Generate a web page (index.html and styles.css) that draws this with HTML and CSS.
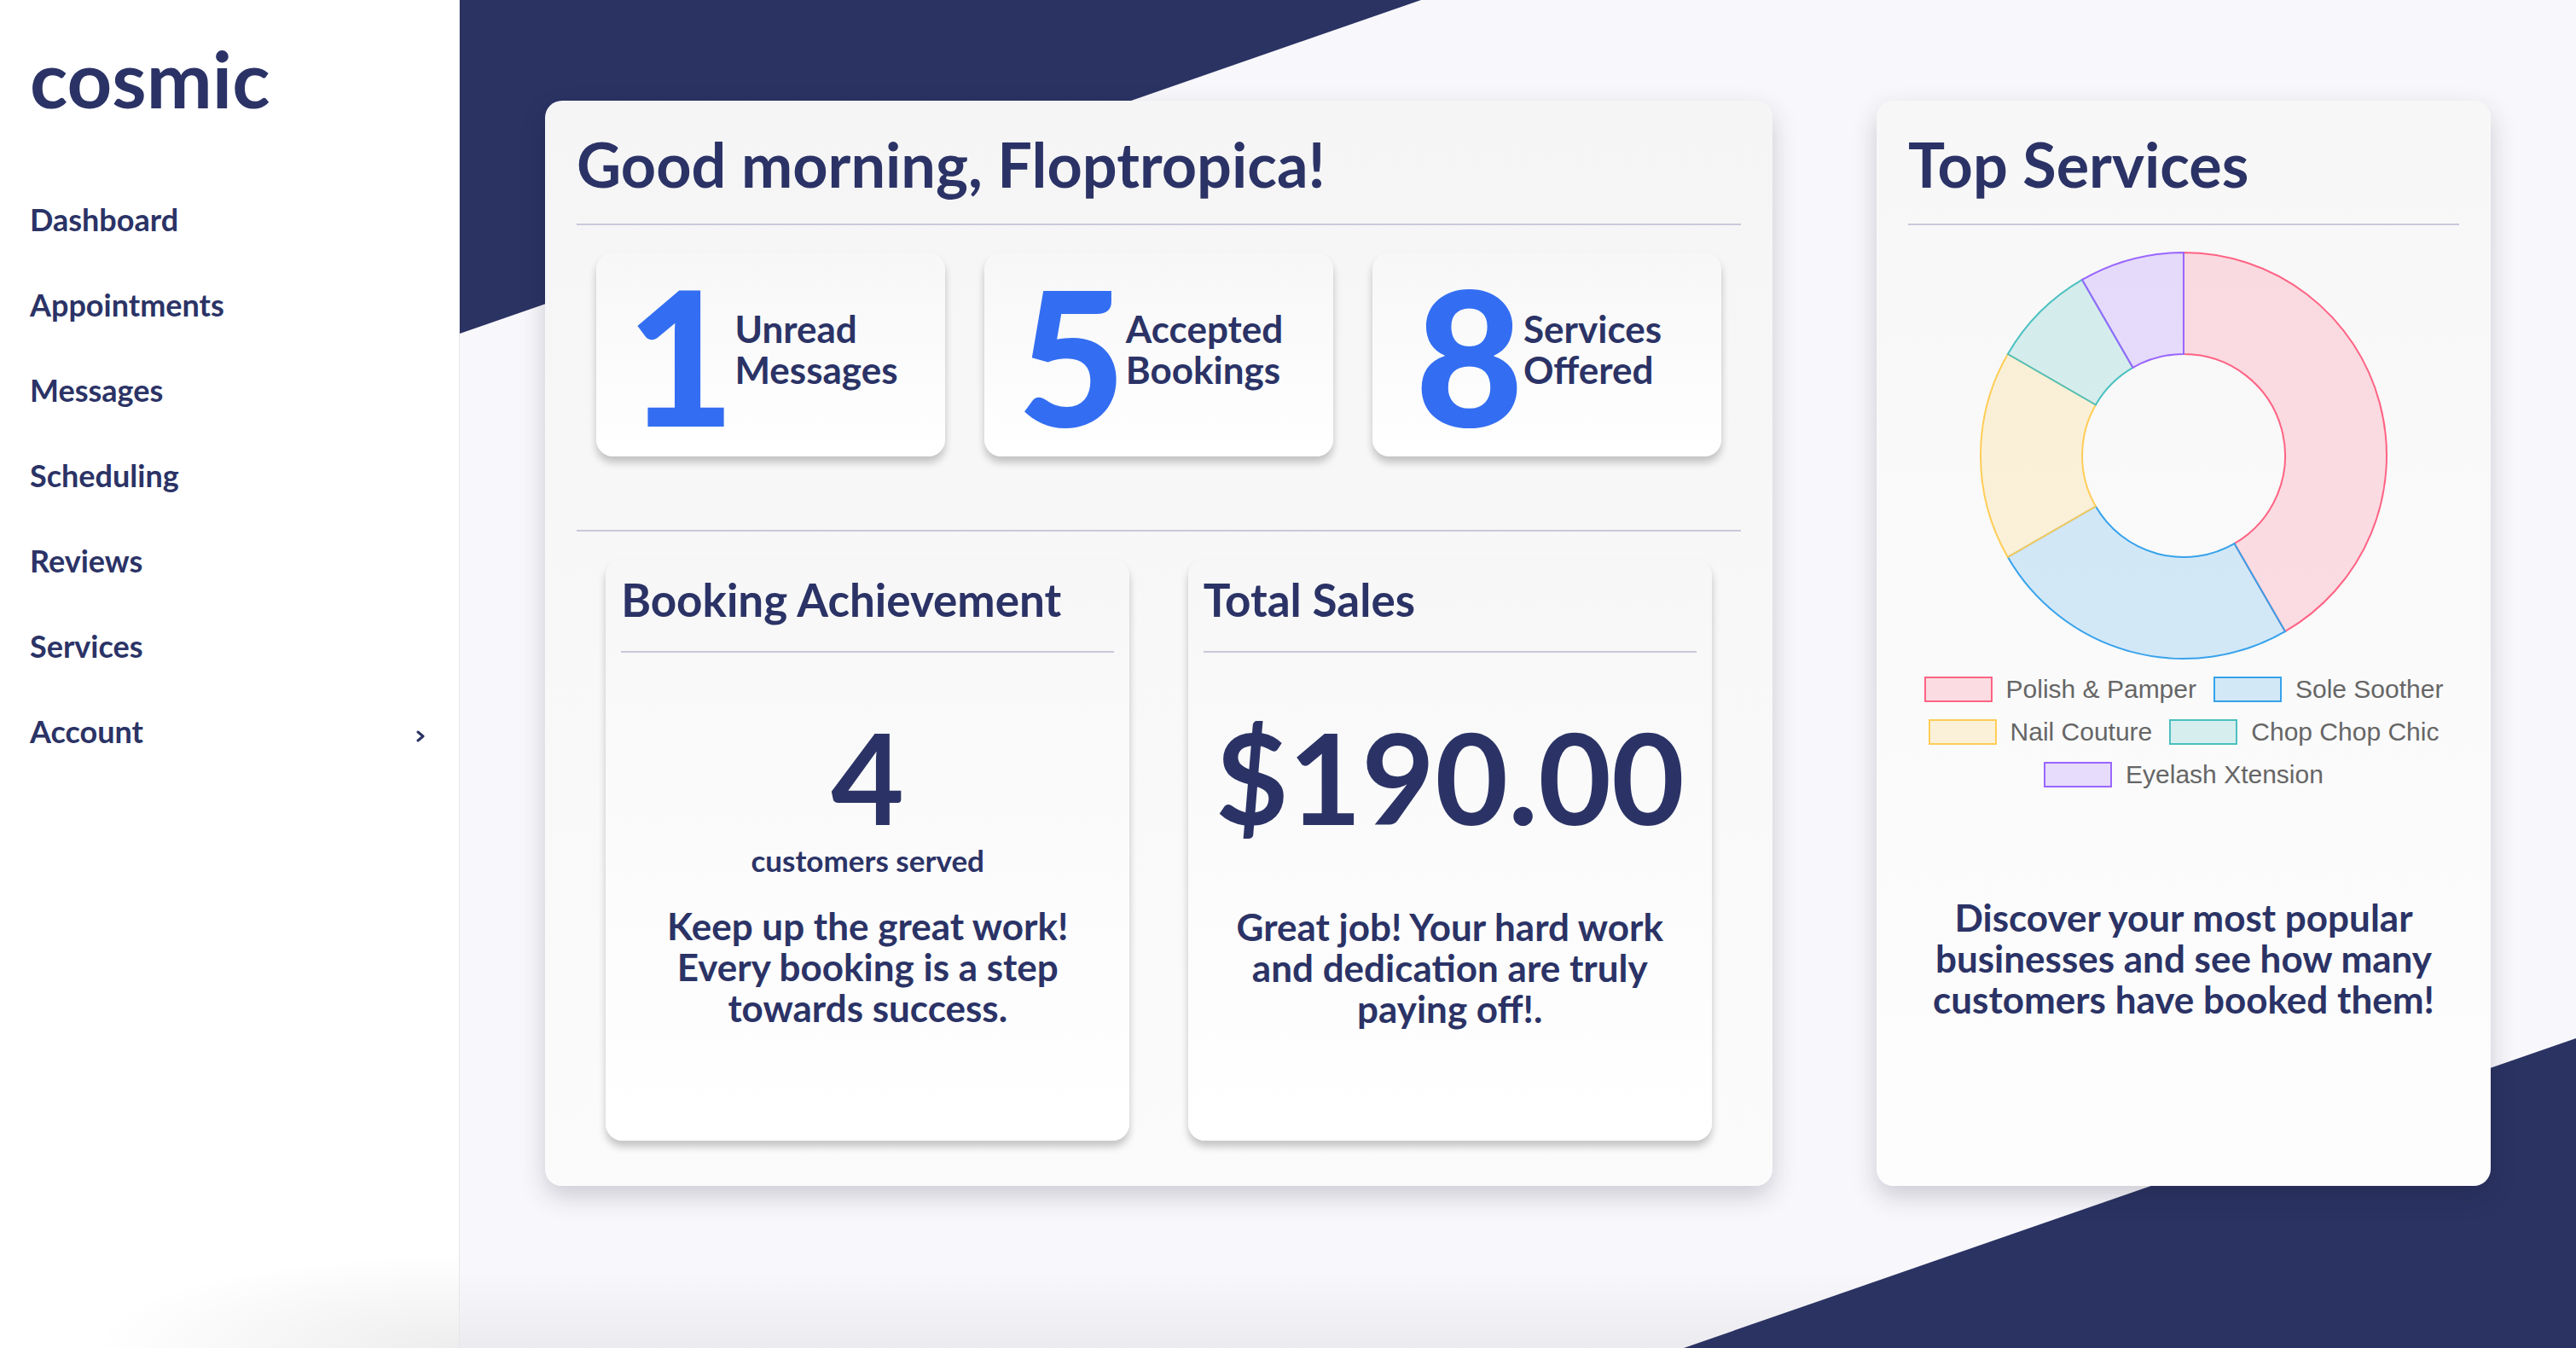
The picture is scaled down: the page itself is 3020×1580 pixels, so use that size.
FILE: index.html
```html
<!DOCTYPE html>
<html lang="en">
<head>
<meta charset="utf-8">
<title>cosmic – Dashboard</title>
<link rel="stylesheet" href="styles.css">
</head>
<body>
<div class="app">
  <aside class="sidebar">
    <div class="logo">cosmic</div>
    <nav class="nav">
      <a class="nav-item" href="#">Dashboard</a>
      <a class="nav-item" href="#">Appointments</a>
      <a class="nav-item" href="#">Messages</a>
      <a class="nav-item" href="#">Scheduling</a>
      <a class="nav-item" href="#">Reviews</a>
      <a class="nav-item" href="#">Services</a>
      <a class="nav-item" href="#"><span>Account</span>
        <svg class="chev" width="10" height="14" viewBox="0 0 10 14"><polyline points="2,2 8,7 2,12" fill="none" stroke="#2b3363" stroke-width="3" stroke-linecap="round" stroke-linejoin="round"/></svg>
      </a>
    </nav>
  </aside>

  <main class="main">
    <svg class="bg-shapes" viewBox="0 0 2481 1580" preserveAspectRatio="none">
      <polygon points="0,0 1127,0 0,391" fill="#2b3363"/>
      <polygon points="1435,1580 2481,1217 2481,1580" fill="#2b3363"/>
    </svg>

    <section class="card card-main">
      <h1 class="card-title">Good morning, Floptropica!</h1>
      <div class="divider"></div>
      <div class="stats">
        <div class="stat"><span class="stat-num">1</span><span class="stat-label">Unread<br>Messages</span></div>
        <div class="stat"><span class="stat-num">5</span><span class="stat-label">Accepted<br>Bookings</span></div>
        <div class="stat"><span class="stat-num">8</span><span class="stat-label">Services<br>Offered</span></div>
      </div>
      <div class="divider divider-lower"></div>
      <div class="panels">
        <div class="panel">
          <h2 class="panel-title">Booking Achievement</h2>
          <div class="divider divider-panel"></div>
          <div class="panel-value">4</div>
          <div class="panel-caption">customers served</div>
          <p class="panel-text">Keep up the great work!<br>Every booking is a step<br>towards success.</p>
        </div>
        <div class="panel">
          <h2 class="panel-title">Total Sales</h2>
          <div class="divider divider-panel"></div>
          <div class="panel-value">$190.00</div>
          <p class="panel-text panel-text-sales">Great job! Your hard work<br>and dedication are truly<br>paying off!.</p>
        </div>
      </div>
    </section>

    <section class="card card-side">
      <h1 class="card-title">Top Services</h1>
      <div class="divider"></div>
      <svg class="donut" width="500" height="500" viewBox="0 0 500 500">
        <path d="M250,12 A238,238 0 0 1 369,456.11 L309.5,353.06 A119,119 0 0 0 250,131 Z" fill="rgba(255,99,132,0.2)" stroke="rgb(255,99,132)" stroke-width="2"/>
        <path d="M369,456.11 A238,238 0 0 1 43.89,369 L146.94,309.5 A119,119 0 0 0 309.5,353.06 Z" fill="rgba(54,162,235,0.2)" stroke="rgb(54,162,235)" stroke-width="2"/>
        <path d="M43.89,369 A238,238 0 0 1 43.89,131 L146.94,190.5 A119,119 0 0 0 146.94,309.5 Z" fill="rgba(255,205,86,0.2)" stroke="rgb(255,205,86)" stroke-width="2"/>
        <path d="M43.89,131 A238,238 0 0 1 131,43.89 L190.5,146.94 A119,119 0 0 0 146.94,190.5 Z" fill="rgba(75,192,192,0.2)" stroke="rgb(75,192,192)" stroke-width="2"/>
        <path d="M131,43.89 A238,238 0 0 1 250,12 L250,131 A119,119 0 0 0 190.5,146.94 Z" fill="rgba(153,102,255,0.2)" stroke="rgb(153,102,255)" stroke-width="2"/>
      </svg>
      <div class="legend">
        <div class="legend-row">
          <span class="legend-item"><span class="swatch swatch-pink"></span>Polish &amp; Pamper</span>
          <span class="legend-item"><span class="swatch swatch-blue"></span>Sole Soother</span>
        </div>
        <div class="legend-row">
          <span class="legend-item"><span class="swatch swatch-yellow"></span>Nail Couture</span>
          <span class="legend-item"><span class="swatch swatch-teal"></span>Chop Chop Chic</span>
        </div>
        <div class="legend-row">
          <span class="legend-item"><span class="swatch swatch-purple"></span>Eyelash Xtension</span>
        </div>
      </div>
      <p class="side-text">Discover your most popular<br>businesses and see how many<br>customers have booked them!</p>
    </section>
  </main>
</div>
</body>
</html>
```
FILE: styles.css
```css
* { box-sizing: border-box; }

body {
  margin: 0;
  font-family: Lato, "Noto Sans", sans-serif;
  color: #2b3366;
}

.app {
  display: flex;
  width: 3020px;
  height: 1580px;
  overflow: hidden;
}

/* Sidebar */
.sidebar {
  width: 539px;
  flex: none;
  background: #fff radial-gradient(ellipse 430px 110px at 100% 100%, rgba(0,0,0,0.07), rgba(0,0,0,0) 100%);
  border-right: 1px solid #e6e6eb;
  padding: 46px 40px 0 35px;
}

.logo {
  font-size: 92px;
  line-height: 92px;
  font-weight: 700;
}

.nav {
  margin-top: 69px;
  display: flex;
  flex-direction: column;
}

.nav-item {
  display: flex;
  align-items: center;
  justify-content: space-between;
  height: 100px;
  line-height: 100px;
  font-size: 36px;
  font-weight: 700;
  color: #2b3366;
  text-decoration: none;
}

.chev { margin-top: 12px; }

/* Main */
.main {
  flex: 1;
  position: relative;
  background: #f8f8fc linear-gradient(to top, rgba(0,0,0,0.05), rgba(0,0,0,0) 90px);
  padding: 118px 100px 190px;
  display: flex;
  gap: 122px;
}

.bg-shapes {
  position: absolute;
  left: 0;
  top: 0;
  width: 100%;
  height: 100%;
  z-index: 0;
}

.card {
  position: relative;
  z-index: 1;
  border-radius: 20px;
  padding: 38px 37px 0;
  box-shadow: 0 12px 30px rgba(20, 20, 40, 0.2);
}

.card-main {
  width: 1439px;
  background: linear-gradient(#f5f5f5, #fbfbfb);
}

.card-side {
  width: 720px;
  background: linear-gradient(#f7f7f7, #fdfdfd);
  display: flex;
  flex-direction: column;
  align-items: center;
}

.card-title {
  margin: 0;
  font-size: 72px;
  line-height: 72px;
  font-weight: 700;
  align-self: stretch;
}

.divider {
  height: 2px;
  background: #c8c9da;
  margin-top: 34px;
  align-self: stretch;
}

/* Stat cards */
.stats {
  display: flex;
  justify-content: space-around;
  margin-top: 32px;
}

.stat {
  width: 30%;
  height: 239px;
  border-radius: 20px;
  background: linear-gradient(#f7f7f7, #ffffff);
  box-shadow: 0 7px 10px rgba(0, 0, 0, 0.22);
  display: flex;
  align-items: center;
  justify-content: center;
  gap: 0;
  padding-right: 20px;
}

.stat-num {
  font-size: 219px;
  line-height: 219px;
  font-weight: 900;
  color: #336ef2;
}

.stat-label {
  font-size: 44px;
  line-height: 48px;
  font-weight: 700;
  margin-bottom: 14px;
}

.divider-lower { margin-top: 86px; }

/* Panels */
.panels {
  display: flex;
  justify-content: space-around;
  margin-top: 32px;
}

.panel {
  width: 45%;
  height: 682px;
  border-radius: 20px;
  background: linear-gradient(#f7f7f7, #ffffff);
  box-shadow: 0 7px 10px rgba(0, 0, 0, 0.22);
  padding: 21px 18px 0;
  display: flex;
  flex-direction: column;
  align-items: center;
  text-align: center;
}

.panel-title {
  margin: 0;
  align-self: stretch;
  text-align: left;
  font-size: 53px;
  line-height: 53px;
  font-weight: 700;
}

.divider-panel { margin-top: 34px; }

.panel-value {
  font-size: 148px;
  line-height: 148px;
  font-weight: 700;
  margin-top: 71px;
}

.panel-caption {
  font-size: 35px;
  line-height: 40px;
  font-weight: 700;
  margin-top: 4px;
}

.panel-text {
  margin: 33px 0 0;
  font-size: 44px;
  line-height: 48px;
  font-weight: 700;
}

.panel-text-sales { margin-top: 78px; }

/* Donut + legend */
.donut {
  margin-top: 20px;
  display: block;
}

.legend {
  margin-top: 9px;
  font-family: "Liberation Sans", Arial, sans-serif;
  font-size: 30px;
  line-height: 30px;
  color: #666;
}

.legend-row {
  display: flex;
  justify-content: center;
  gap: 20px;
  margin-bottom: 20px;
}

.legend-item {
  display: flex;
  align-items: center;
  gap: 16px;
  white-space: nowrap;
}

.swatch {
  width: 80px;
  height: 30px;
  border: 2px solid;
}

.swatch-pink { border-color: rgb(255,99,132); background: rgba(255,99,132,0.2); }
.swatch-blue { border-color: rgb(54,162,235); background: rgba(54,162,235,0.2); }
.swatch-yellow { border-color: rgb(255,205,86); background: rgba(255,205,86,0.2); }
.swatch-teal { border-color: rgb(75,192,192); background: rgba(75,192,192,0.2); }
.swatch-purple { border-color: rgb(153,102,255); background: rgba(153,102,255,0.2); }

.side-text {
  margin: 108px 0 0;
  text-align: center;
  font-size: 44px;
  line-height: 48px;
  font-weight: 700;
}
```
